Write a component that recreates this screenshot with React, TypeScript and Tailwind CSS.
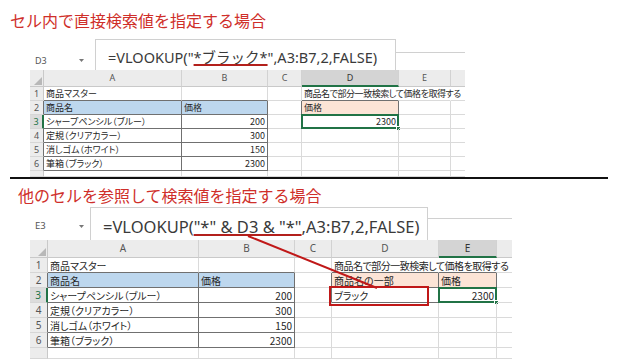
import React from 'react';

type V = 'top' | 'bottom';

const JPF = "[font-family:'Noto_Sans_CJK_JP','Noto_Sans',sans-serif]";
const PALT = "[font-feature-settings:'palt']";
const LAT = "[font-family:'Noto_Sans','Noto_Sans_CJK_JP',sans-serif]";

const DARK_R = 'border-r border-r-[#707070]';
const DARK_B = 'border-b border-b-[#707070]';
const GRID_R = 'border-r border-r-[#dadada]';
const GRID_B = 'border-b border-b-[#dadada]';

function content(v: V, r: number, c: number): { t: string; right?: boolean; tight?: boolean } | null {
  const top = v === 'top';
  if (c === 1) {
    const a = ['', '商品マスター', '商品名', 'シャープペンシル（ブルー）', '定規（クリアカラー）', '消しゴム（ホワイト）', '筆箱（ブラック）'];
    return a[r] ? { t: a[r] } : null;
  }
  if (c === 2) {
    const b = ['', '', '価格', '200', '300', '150', '2300'];
    if (!b[r]) return null;
    return { t: b[r], right: r >= 3 };
  }
  if (c === 4) {
    if (r === 1) return { t: '商品名で部分一致検索して価格を取得する', tight: true };
    if (top) {
      if (r === 2) return { t: '価格' };
      if (r === 3) return { t: '2300', right: true };
    } else {
      if (r === 2) return { t: '商品名の一部' };
      if (r === 3) return { t: 'ブラック' };
    }
  }
  if (c === 5 && !top) {
    if (r === 2) return { t: '価格' };
    if (r === 3) return { t: '2300', right: true };
  }
  return null;
}

function Grid({ v }: { v: V }) {
  const top = v === 'top';
  const gridCls = top
    ? 'grid grid-cols-[14px_138px_86px_34px_97px_52px_14px] grid-rows-[17px_14px_14px_14px_14px_14px_14px_6px] text-[9px]'
    : 'grid grid-cols-[18px_151px_96px_37px_107px_58px_15px] grid-rows-[18px_15px_15px_15px_15px_15px_15px_11px] text-[10px]';
  const letters = ['', 'A', 'B', 'C', 'D', 'E', ''];
  const selCol = top ? 4 : 5;
  const sideCols = top ? [4] : [4, 5];
  const cells: React.ReactNode[] = [];

  for (let r = 0; r < 8; r++) {
    for (let c = 0; c < 7; c++) {
      const key = `${r}-${c}`;
      if (r === 0) {
        if (c === 0) {
          cells.push(
            <div key={key} className="relative bg-[#ececec] border-r border-b border-[#c9c9c9]">
              <svg className="absolute right-[1px] bottom-[1px]" width="8" height="8" viewBox="0 0 8 8">
                <polygon points="8,0 8,8 0,8" fill="#b8b8b8" />
              </svg>
            </div>
          );
        } else {
          const sel = c === selCol;
          const cls = sel
            ? 'bg-[#d4d4d4] border-b-2 border-b-[#217346] text-[#333]'
            : 'bg-[#ececec] border-b border-b-[#c9c9c9] text-[#555]';
          const rb = c === 6 ? '' : 'border-r border-r-[#d2d2d2]';
          cells.push(
            <div key={key} className={`${cls} ${rb} flex items-center justify-center ${LAT}`}>
              {letters[c]}
            </div>
          );
        }
        continue;
      }
      if (c === 0) {
        let rc = 'border-r border-r-[#c9c9c9] bg-[#ececec] text-[#555]';
        if (r >= 2 && r <= 6) rc = `${DARK_R} bg-[#ececec] text-[#555]`;
        if (r === 3) rc = 'border-r-2 border-r-[#217346] bg-[#dcdcdc] text-[#217346]';
        cells.push(
          <div key={key} className={`${rc} border-b border-b-[#d6d6d6] flex items-center justify-center ${LAT}`}>
            {r <= 6 ? r : ''}
          </div>
        );
        continue;
      }
      let right = GRID_R;
      let bottom = GRID_B;
      if (r >= 2 && r <= 6 && (c === 1 || c === 2)) right = DARK_R;
      if (r >= 1 && r <= 6 && (c === 1 || c === 2)) bottom = DARK_B;
      if (r >= 2 && r <= 3 && (c === 3 || sideCols.includes(c))) right = DARK_R;
      if (r >= 1 && r <= 3 && sideCols.includes(c)) bottom = DARK_B;
      if (r === 1 && (c === 4 || c === 5)) right = 'border-r border-r-transparent';
      if (c === 6) right = '';
      let bg = '';
      if (r === 2 && (c === 1 || c === 2)) bg = 'bg-[#bdd7ee]';
      if (r === 2 && sideCols.includes(c)) bg = 'bg-[#fce4d6]';
      const ct = content(v, r, c);
      const sel = r === 3 && c === selCol;
      const tight = ct?.tight ? (top ? 'tracking-[-0.45px]' : 'tracking-[-0.5px]') : '';
      cells.push(
        <div
          key={key}
          className={`relative ${right} ${bottom} ${bg} flex items-center px-[2px] whitespace-nowrap text-[#262626] ${ct?.right ? 'justify-end' : 'justify-start'} ${tight} ${JPF} ${PALT}`}
        >
          {ct?.t}
          {sel && (
            <div className="absolute -left-px -top-px -right-px -bottom-px border-2 border-[#217346]">
              <div className="absolute -right-[4px] -bottom-[4px] w-[5px] h-[5px] bg-[#217346] border border-white" />
            </div>
          )}
        </div>
      );
    }
  }
  return <div className={`${gridCls} overflow-hidden`}>{cells}</div>;
}

function NameBox({ label, big }: { label: string; big?: boolean }) {
  return (
    <div
      className={`w-[60px] self-end flex items-center justify-between pl-[5px] pr-[6px] text-[#555] ${LAT} ${
        big ? 'h-[18px] text-[9.5px] mb-[5px]' : 'h-[17px] text-[9px] mb-[1px]'
      }`}
    >
      <span>{label}</span>
      <svg width="5" height="3" viewBox="0 0 5 3">
        <polygon points="0,0 5,0 2.5,3" fill="#777" />
      </svg>
    </div>
  );
}

export default function App() {
  return (
    <div className="relative w-[639px] h-[359px] bg-white overflow-hidden flex flex-col">
      <div className={`h-[39px] pt-[9px] pl-[10px] text-[16px] leading-[22px] text-[#cf2f2a] whitespace-nowrap ${JPF}`}>
        セル内で直接検索値を指定する場合
      </div>
      <div className="ml-[30px] w-[435px] flex flex-col">
        <div className="flex h-[31px]">
          <NameBox label="D3" />
          <div
            className={`ml-[5px] w-[301px] border-t border-x border-[#d0d0d0] pl-[12px] pt-[8px] text-[14.5px] leading-[18px] text-[#3a3a3a] whitespace-nowrap ${LAT}`}
          >
            =VLOOKUP("
            <span className="underline decoration-2 decoration-[#b3201c]">*ブラック*</span>
            ",A3:B7,2,FALSE)
          </div>
          <div className="flex-1 mt-[13px] border-t border-[#d0d0d0]" />
        </div>
        <Grid v="top" />
      </div>
      <div className="ml-[10px] w-[598px] h-[2px] bg-[#111]" />
      <div className={`h-[28px] pt-[5px] pl-[18px] text-[16px] leading-[22px] text-[#cf2f2a] whitespace-nowrap ${JPF}`}>
        他のセルを参照して検索値を指定する場合
      </div>
      <div className="ml-[30px] w-[482px] flex flex-col">
        <div className="flex h-[33px]">
          <NameBox label="E3" big />
          <div
            className={`w-[338px] border-t border-x border-[#d0d0d0] pl-[12px] pt-[9px] text-[16.5px] leading-[20px] text-[#3a3a3a] whitespace-nowrap ${LAT}`}
          >
            =VLOOKUP(
            <span className="underline decoration-2 decoration-[#b3201c]">"*" &amp; D3 &amp; "*"</span>
            ,A3:B7,2,FALSE)
          </div>
          <div className="flex-1 mt-[11px] border-t border-[#d0d0d0]" />
        </div>
        <Grid v="bottom" />
      </div>
      <svg className="absolute left-0 top-0 pointer-events-none" width="639" height="359" viewBox="0 0 639 359">
        <line x1="248" y1="236" x2="377" y2="288" stroke="#c01818" strokeWidth="2" />
        <rect x="330" y="287" width="98" height="18" fill="none" stroke="#c01818" strokeWidth="2" />
      </svg>
    </div>
  );
}
